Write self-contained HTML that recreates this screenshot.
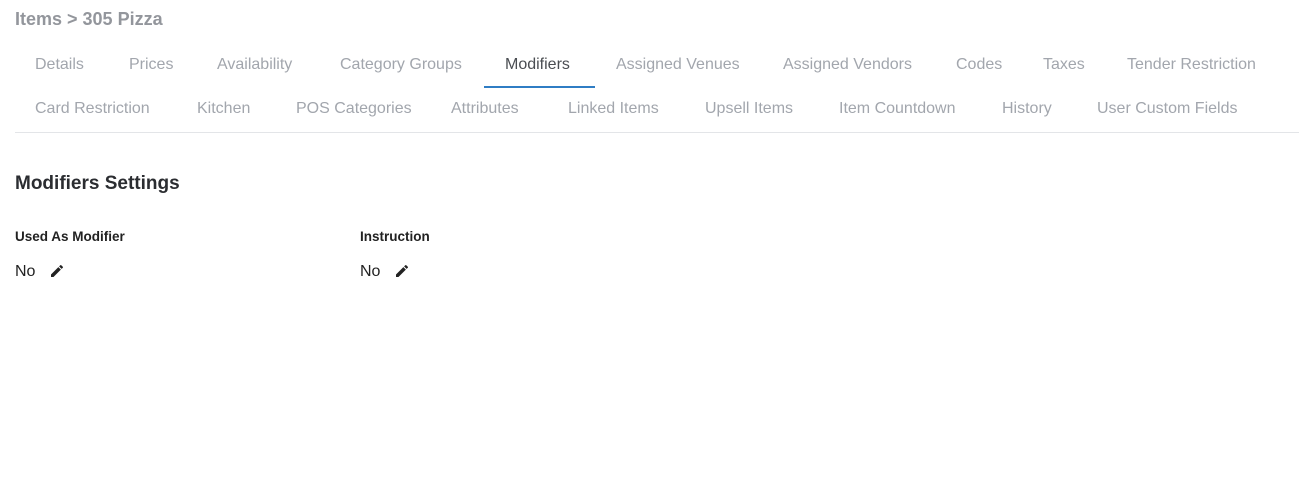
<!DOCTYPE html>
<html><head><style>
body{margin:0;width:1299px;height:499px;background:#fff;font-family:"Liberation Sans",sans-serif;position:relative;overflow:hidden}
.a{position:absolute;white-space:nowrap}
.t{font-size:16px;color:#a2a6ad;line-height:18px}
</style></head><body>
<div class="a" style="left:15px;top:8px;font-size:18px;color:#93969c;font-weight:bold;line-height:22px">Items &gt; 305 Pizza</div>
<div class="a t" style="left:35px;top:56px">Details</div>
<div class="a t" style="left:129px;top:56px">Prices</div>
<div class="a t" style="left:217px;top:56px">Availability</div>
<div class="a t" style="left:340px;top:56px">Category Groups</div>
<div class="a t" style="left:505px;top:56px;color:#4a4d52">Modifiers</div>
<div class="a t" style="left:616px;top:56px">Assigned Venues</div>
<div class="a t" style="left:783px;top:56px">Assigned Vendors</div>
<div class="a t" style="left:956px;top:56px">Codes</div>
<div class="a t" style="left:1043px;top:56px">Taxes</div>
<div class="a t" style="left:1127px;top:56px">Tender Restriction</div>
<div class="a" style="left:484px;top:86px;width:111px;height:2px;background:#2f7dc4"></div>
<div class="a t" style="left:35px;top:100px">Card Restriction</div>
<div class="a t" style="left:197px;top:100px">Kitchen</div>
<div class="a t" style="left:296px;top:100px">POS Categories</div>
<div class="a t" style="left:451px;top:100px">Attributes</div>
<div class="a t" style="left:568px;top:100px">Linked Items</div>
<div class="a t" style="left:705px;top:100px">Upsell Items</div>
<div class="a t" style="left:839px;top:100px">Item Countdown</div>
<div class="a t" style="left:1002px;top:100px">History</div>
<div class="a t" style="left:1097px;top:100px">User Custom Fields</div>
<div class="a" style="left:15px;top:132px;width:1284px;height:1px;background:#e3e5e8"></div>
<div class="a" style="left:15px;top:173px;font-size:19px;font-weight:bold;color:#2b2d31;line-height:22px">Modifiers Settings</div>
<div class="a" style="left:15px;top:229px;font-size:13.5px;font-weight:bold;color:#222;line-height:15px">Used As Modifier</div>
<div class="a" style="left:360px;top:229px;font-size:13.5px;font-weight:bold;color:#222;line-height:15px">Instruction</div>
<div class="a" style="left:15px;top:262px;font-size:16px;color:#222;line-height:19px">No</div>
<div class="a" style="left:360px;top:262px;font-size:16px;color:#222;line-height:19px">No</div>
<svg class="a" style="left:49px;top:263px" width="16" height="16" viewBox="0 0 24 24"><path fill="#222" d="M3 17.25V21h3.75L17.81 9.94l-3.75-3.75L3 17.25zM20.71 7.04a1 1 0 000-1.41l-2.34-2.34a1 1 0 00-1.41 0l-1.83 1.83 3.75 3.75 1.83-1.83z"/></svg>
<svg class="a" style="left:394px;top:263px" width="16" height="16" viewBox="0 0 24 24"><path fill="#222" d="M3 17.25V21h3.75L17.81 9.94l-3.75-3.75L3 17.25zM20.71 7.04a1 1 0 000-1.41l-2.34-2.34a1 1 0 00-1.41 0l-1.83 1.83 3.75 3.75 1.83-1.83z"/></svg>
</body></html>
